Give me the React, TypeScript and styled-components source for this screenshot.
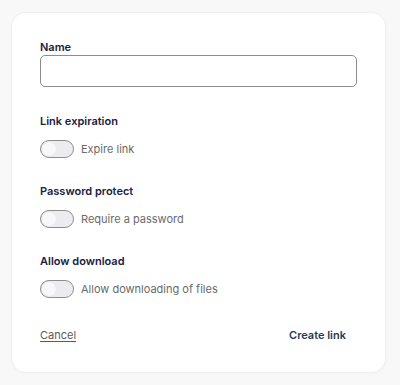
import React, { useState } from "react";
import styled, { createGlobalStyle } from "styled-components";

const Global = createGlobalStyle`
  html, body { margin: 0; padding: 0; background: #f8f8f8; }
  body { font-family: Inter, "Noto Sans", sans-serif; -webkit-font-smoothing: antialiased; }
  * { box-sizing: border-box; }
`;

const Page = styled.div`
  width: 400px;
  height: 385px;
  padding: 13px 15px 0 12px;
`;

const Card = styled.div`
  width: 373px;
  height: 359px;
  background: #ffffff;
  border-radius: 14px;
  box-shadow: 0 0 0 1px #f0f0f0, 0 1px 4px rgba(0, 0, 0, 0.04);
  padding: 26px 28px 29px 28px;
  display: flex;
  flex-direction: column;
`;

const Section = styled.div<{ $mt?: number }>`
  display: flex;
  flex-direction: column;
  margin-top: ${(p) => p.$mt ?? 0}px;
`;

const Label = styled.label<{ $mb?: number }>`
  font-size: 11px;
  line-height: 16px;
  font-weight: 600;
  color: #1b2042;
  margin-bottom: ${(p) => p.$mb ?? 0}px;
`;

const Input = styled.input`
  height: 32px;
  width: 100%;
  border: 1px solid #8c8c8c;
  border-radius: 5px;
  padding: 0 10px;
  font: inherit;
  font-size: 11px;
  outline: none;
`;

const ToggleRow = styled.label`
  display: flex;
  align-items: center;
  gap: 7px;
  height: 20px;
  cursor: pointer;
`;

const Track = styled.span<{ $on: boolean }>`
  position: relative;
  width: 34px;
  height: 18px;
  border-radius: 10px;
  border: 1px solid #8e8e8e;
  background: ${(p) => (p.$on ? "#1f3a5a" : "#ececf0")};
  flex: none;
`;

const Thumb = styled.span<{ $on: boolean }>`
  position: absolute;
  top: 1px;
  left: ${(p) => (p.$on ? "17px" : "1px")};
  width: 14px;
  height: 14px;
  border-radius: 50%;
  background: #f8f8fa;
  box-shadow: 0 0 1px rgba(0, 0, 0, 0.06);
`;

const ToggleText = styled.span`
  font-size: 11px;
  color: #6a6a6a;
`;

const Footer = styled.div`
  margin-top: auto;
  display: flex;
  justify-content: space-between;
  align-items: center;
  padding-right: 11px;
  height: 16px;
`;

const LinkButton = styled.button`
  background: none;
  border: none;
  padding: 0;
  font: inherit;
  font-size: 11px;
  color: #5a5a5a;
  text-decoration: underline;
  text-underline-offset: 2px;
  cursor: pointer;
`;

const PrimaryButton = styled.button`
  background: none;
  border: none;
  padding: 0;
  font: inherit;
  font-size: 11px;
  font-weight: 600;
  color: #1f3a5a;
  cursor: pointer;
`;

function Toggle({ label }: { label: string }) {
  const [on, setOn] = useState(false);
  return (
    <ToggleRow onClick={() => setOn(!on)}>
      <Track $on={on}>
        <Thumb $on={on} />
      </Track>
      <ToggleText>{label}</ToggleText>
    </ToggleRow>
  );
}

export default function App() {
  return (
    <>
      <Global />
      <Page>
        <Card>
          <Section>
            <Label $mb={0}>Name</Label>
            <Input />
          </Section>
          <Section $mt={26}>
            <Label $mb={10}>Link expiration</Label>
            <Toggle label="Expire link" />
          </Section>
          <Section $mt={24}>
            <Label $mb={10}>Password protect</Label>
            <Toggle label="Require a password" />
          </Section>
          <Section $mt={24}>
            <Label $mb={10}>Allow download</Label>
            <Toggle label="Allow downloading of files" />
          </Section>
          <Footer>
            <LinkButton>Cancel</LinkButton>
            <PrimaryButton>Create link</PrimaryButton>
          </Footer>
        </Card>
      </Page>
    </>
  );
}
